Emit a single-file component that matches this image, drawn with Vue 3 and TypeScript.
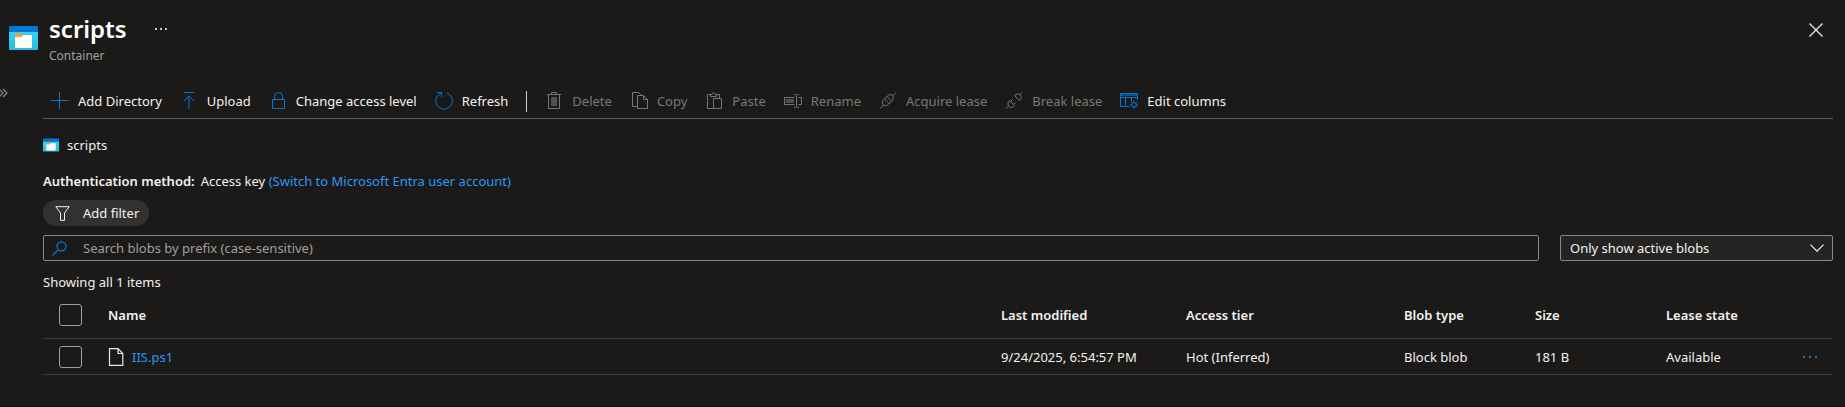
<script setup lang="ts">
import { ref } from 'vue'

interface Shape {
  d: string
  solid?: boolean
}

interface Command {
  label: string
  icon: Shape[]
  enabled: boolean
  dividerBefore?: boolean
}

interface Blob {
  name: string
  modified: string
  tier: string
  type: string
  size: string
  lease: string
}

const commands: Command[] = [
  { label: 'Add Directory', enabled: true, icon: [{ d: 'M8.5 0v17M0 8.5h17.5' }] },
  { label: 'Upload', enabled: true, icon: [{ d: 'M4 .5h10M9 3.5V17M4 9l5-5 5 5' }] },
  {
    label: 'Change access level',
    enabled: true,
    icon: [{ d: 'M3.5 7.5h12v9h-12zM5.5 7.5V4.5a4 4 0 0 1 8 0v3' }],
  },
  {
    label: 'Refresh',
    enabled: true,
    icon: [{ d: 'M11.8 1A8.3 8.3 0 1 1 6.2 1.1M1.8 .6h4.9v4.6' }],
  },
  {
    label: 'Delete',
    enabled: false,
    dividerBefore: true,
    icon: [
      { d: 'M2 2.5h14M6.5 2.5V.5h5v2M3.5 2.5v14h11v-14' },
      { d: 'M6 5h6v9H6z', solid: true },
    ],
  },
  {
    label: 'Copy',
    enabled: false,
    icon: [{ d: 'M7.5 14.5h-5V.5h6l3.2 3M7.5 3.5h6l4 4v9h-10zM13.5 3.5v4h4' }],
  },
  {
    label: 'Paste',
    enabled: false,
    icon: [{ d: 'M8.5 16.5h-6v-14h3M11.5 2.5h3v4M5.5 4.5v-2h1.500c0-2.5 3-2.5 3 0h1.500v2zM8.5 6.5h8v10h-8z' }],
  },
  {
    label: 'Rename',
    enabled: false,
    icon: [
      { d: 'M10.5 12.5H.5v-7h10M14.5 5.5h3v7h-3M10 2.5h1.500l1 1 1-1H15M10 15.5h1.500l1-1 1 1H15M12.5 3.5v11' },
      { d: 'M2 7h8v4H2z', solid: true },
    ],
  },
  {
    label: 'Acquire lease',
    enabled: false,
    icon: [{ d: 'M1 16.500l3.500-3.500M13.500 4L17 .5M4.500 13c-1.800-1.800-1-4.200.5-5.700L8.300 4c1.500-1.500 3.900-1.800 5.200-.5s1 3.700-.5 5.200l-3.300 3.300c-1.500 1.500-3.700 2.500-5.200 1zM5.500 7l5 5M8 4.500l5 5' }],
  },
  {
    label: 'Break lease',
    enabled: false,
    icon: [{ d: 'M1 16.500l2.500-2.500M14.500 3l2.500-2.500M4.500 8.500l5 5c-1.500 2-4 2.500-5.500 1s-1.500-4 .5-6zM9.500 3.500l5 5c2-1.500 2.500-4 1-5.500s-4-1.500-6 .5zM5.500 9.500l2-2M8.500 12.500l2-2' }],
  },
  {
    label: 'Edit columns',
    enabled: true,
    icon: [
      { d: 'M9.500 14.500H.5v-13h17v6.500M.5 5.500h17M5.500 5.500v9M11.500 5.500v4M14 10.500a2.300 2.300 0 1 1 0 4.600a2.300 2.300 0 1 1 0-4.600M14 8.800v1.700M14 15.100v1.700M10 12.800h1.700M16.300 12.800H18M11.200 10l1.200 1.200M15.600 14.400l1.200 1.200M16.800 10l-1.200 1.200M12.400 14.400l-1.200 1.200' },
      { d: 'M0 2h18v2H0z', solid: true },
    ],
  },
]

const blobs: Blob[] = [
  {
    name: 'IIS.ps1',
    modified: '9/24/2025, 6:54:57 PM',
    tier: 'Hot (Inferred)',
    type: 'Block blob',
    size: '181 B',
    lease: 'Available',
  },
]

const columns: string[] = ['Name', 'Last modified', 'Access tier', 'Blob type', 'Size', 'Lease state']
const prefix = ref('')
const visibility = ref('active')
const selected = ref<string[]>([])

function toggleAll(event: Event): void {
  const on = (event.target as HTMLInputElement).checked
  selected.value = on ? blobs.map((b) => b.name) : []
}
</script>

<template>
  <div class="blade">
    <svg class="defs" aria-hidden="true">
      <defs>
        <linearGradient id="container-body" x1="0" y1="0" x2="0" y2="1">
          <stop offset="0" stop-color="#32d4f5" />
          <stop offset="1" stop-color="#2fb9dc" />
        </linearGradient>
        <symbol id="container" viewBox="0 0 29 24">
          <path d="M0 5h29v18a1 1 0 0 1-1 1H1a1 1 0 0 1-1-1z" fill="url(#container-body)" />
          <path d="M1 0h27a1 1 0 0 1 1 1v5H0V1a1 1 0 0 1 1-1z" fill="#0078d4" />
          <path d="M6 8.500a1 1 0 0 1 1-1h5.500l1.500 1.500v3H6z" fill="#ff9a2e" />
          <path d="M6 11h6.500l2-2H22a1 1 0 0 1 1 1v11a1 1 0 0 1-1 1H7a1 1 0 0 1-1-1z" fill="#fff" />
        </symbol>
      </defs>
    </svg>

    <header class="head">
      <svg class="logo" aria-hidden="true"><use href="#container" /></svg>
      <div class="titles">
        <div class="title-row">
          <h1>scripts</h1>
          <button class="dots" type="button" aria-label="More options">
            <svg width="12" height="2" viewBox="0 0 12 2"><path d="M0 0h2v2H0zM5 0h2v2H5zM10 0h2v2h-2z" fill="currentColor" opacity="0.8" /></svg>
          </button>
        </div>
        <p>Container</p>
      </div>
      <button class="close" type="button" aria-label="Close">
        <svg width="14" height="14" viewBox="0 0 14 14"><path d="M.5.5l13 13M13.500.5l-13 13" stroke="currentColor" stroke-width="1.200" /></svg>
      </button>
    </header>

    <div class="body">
      <button class="expand" type="button" aria-label="Expand menu">
        <svg width="8" height="10" viewBox="0 0 8 10"><path d="M-1 1l4 4-4 4M3 1l4 4-4 4" fill="none" stroke="currentColor" stroke-width="1.200" /></svg>
      </button>

      <main>
        <div class="toolbar" role="toolbar" aria-label="Container commands">
          <template v-for="c in commands" :key="c.label">
            <span v-if="c.dividerBefore" class="divider"></span>
            <button type="button" :disabled="!c.enabled">
              <svg class="icon" viewBox="0 0 18 18" aria-hidden="true">
                <path v-for="(s, i) in c.icon" :key="i" :d="s.d" :class="s.solid ? 'solid' : 'line'" />
              </svg>
              {{ c.label }}
            </button>
          </template>
        </div>

        <nav class="crumb" aria-label="Location">
          <svg class="crumb-icon" aria-hidden="true"><use href="#container" /></svg>
          <span>scripts</span>
        </nav>

        <p class="auth"><strong>Authentication method:</strong><span>Access key <a href="#">(Switch to Microsoft Entra user account)</a></span></p>

        <button class="pill" type="button">
          <svg width="15" height="15" viewBox="0 0 15 15" aria-hidden="true"><path d="M.8.7h13.400L9.500 7v7.300h-4V7z" fill="none" stroke="currentColor" /></svg>
          Add filter
        </button>

        <div class="filters">
          <label class="search">
            <svg width="15" height="15" viewBox="0 0 15 15" aria-hidden="true"><path d="M.5 14.500l5.700-5.700M14 5.300a4.500 4.500 0 1 1-9 0a4.500 4.500 0 1 1 9 0z" fill="none" stroke="currentColor" stroke-width="1.300" /></svg>
            <input v-model="prefix" type="text" placeholder="Search blobs by prefix (case-sensitive)" aria-label="Search blobs by prefix" />
          </label>
          <div class="select">
            <select v-model="visibility" aria-label="Blob visibility">
              <option value="active">Only show active blobs</option>
            </select>
            <svg width="14" height="8" viewBox="0 0 14 8" aria-hidden="true"><path d="M.5.7L7 7.200 13.500.7" fill="none" stroke="currentColor" stroke-width="1.200" /></svg>
          </div>
        </div>

        <p class="count">Showing all {{ blobs.length }} items</p>

        <table>
          <colgroup>
            <col class="c-check" /><col /><col class="c-modified" /><col class="c-tier" />
            <col class="c-short" /><col class="c-short" /><col class="c-lease" /><col class="c-menu" />
          </colgroup>
          <thead>
            <tr>
              <th class="check"><input type="checkbox" aria-label="Select all" :checked="selected.length === blobs.length" @change="toggleAll" /></th>
              <th v-for="h in columns" :key="h" scope="col">{{ h }}</th>
              <th></th>
            </tr>
          </thead>
          <tbody>
            <tr v-for="b in blobs" :key="b.name">
              <td class="check"><input v-model="selected" type="checkbox" :value="b.name" :aria-label="'Select ' + b.name" /></td>
              <td>
                <a class="file" href="#">
                  <svg width="16" height="18" viewBox="0 0 16 18" aria-hidden="true"><path d="M1.500.7h8.500l4.800 4.800v11.800H1.500zM10 .7v4.800h4.800" fill="none" stroke="#e8e6e4" stroke-width="1.200" /></svg>
                  {{ b.name }}
                </a>
              </td>
              <td>{{ b.modified }}</td>
              <td>{{ b.tier }}</td>
              <td>{{ b.type }}</td>
              <td>{{ b.size }}</td>
              <td>{{ b.lease }}</td>
              <td>
                <button class="row-menu" type="button" :aria-label="'Actions for ' + b.name">
                  <svg width="16" height="2" viewBox="0 0 16 2"><path d="M1 0h2v2H1zM7 0h2v2H7zM13 0h2v2h-2z" fill="currentColor" /></svg>
                </button>
              </td>
            </tr>
          </tbody>
        </table>
      </main>
    </div>
  </div>
</template>

<style>
body {
  background: #1b1a19;
}
</style>

<style scoped>
.blade {
  box-sizing: border-box;
  min-height: 100vh;
  border-bottom: 1px solid #0f0f0f;
  background: #1b1a19;
  color: #f3f2f1;
  font: 13px/20px "Noto Sans", "Open Sans", sans-serif;
}
.defs {
  display: block;
  width: 0;
  height: 0;
}
button {
  display: flex;
  align-items: center;
  padding: 0;
  border: 0;
  background: none;
  color: inherit;
  font: inherit;
}
p, h1 {
  margin: 0;
}
a {
  color: #2899f5;
  text-decoration: none;
}
.head {
  display: flex;
  align-items: flex-start;
  padding: 14px 22px 20px 9px;
}
.logo {
  width: 29px;
  height: 24px;
  margin: 12px 11px 0 0;
}
.titles {
  flex: 1;
}
.title-row {
  display: flex;
  align-items: center;
  gap: 28px;
}
h1 {
  color: #fff;
  font-size: 24px;
  font-weight: 600;
  line-height: 30px;
}
.titles p {
  margin-top: 4px;
  color: #a19f9d;
  font-size: 12px;
  line-height: 16px;
}
.close {
  margin-top: 9px;
}
.body {
  display: flex;
  align-items: flex-start;
}
.expand {
  width: 43px;
  margin-top: 4px;
  color: #8a8886;
}
main {
  flex: 1;
  min-width: 0;
  padding-right: 12px;
}
.toolbar {
  display: flex;
  align-items: center;
  gap: 18px;
  height: 34px;
  padding-left: 8px;
  border-bottom: 1px solid #605e5c;
  white-space: nowrap;
}
.toolbar button {
  gap: 9px;
}
.toolbar button:disabled {
  color: #797775;
}
.divider {
  width: 1px;
  height: 21px;
  background: #d2d0ce;
}
.icon {
  width: 18px;
  height: 18px;
  color: #0078d4;
}
button:disabled .icon {
  color: #797775;
}
.line {
  fill: none;
  stroke: currentColor;
}
.solid {
  fill: currentColor;
  opacity: 0.6;
}
.crumb {
  display: flex;
  align-items: center;
  gap: 8px;
  margin-top: 16px;
}
.crumb-icon {
  width: 16px;
  height: 14px;
}
.auth {
  display: flex;
  gap: 6px;
  margin-top: 16px;
}
strong, th {
  font-weight: 600;
}
.pill {
  gap: 13px;
  height: 26px;
  margin-top: 9px;
  padding: 0 10px 0 12px;
  border-radius: 13px;
  background: #323130;
}
.filters {
  display: flex;
  gap: 21px;
  margin-top: 9px;
}
.search, .select {
  box-sizing: border-box;
  display: flex;
  align-items: center;
  height: 26px;
  border: 1px solid #8a8886;
  border-radius: 2px;
}
.search {
  flex: 1;
  gap: 16px;
  padding-left: 8px;
  color: #0078d4;
}
input, select {
  min-width: 0;
  border: 0;
  outline: 0;
  background: none;
  color: #f3f2f1;
  font: inherit;
}
.search input {
  flex: 1;
  padding: 0;
}
.search input::placeholder {
  color: #a19f9d;
  opacity: 1;
}
.select {
  width: 273px;
  padding-right: 8px;
  background: #252423;
}
select {
  flex: 1;
  padding: 0 0 0 9px;
  appearance: none;
}
option {
  background: #252423;
}
.count {
  margin-top: 11px;
}
table {
  width: 100%;
  border-collapse: separate;
  border-spacing: 0;
  table-layout: fixed;
}
.c-check {
  width: 65px;
}
.c-modified {
  width: 185px;
}
.c-tier {
  width: 218px;
}
.c-short {
  width: 131px;
}
.c-lease {
  width: 136px;
}
.c-menu {
  width: 31px;
}
th, td {
  box-sizing: border-box;
  height: 36px;
  padding: 0;
  border-bottom: 1px solid #3b3a39;
  text-align: left;
  white-space: nowrap;
}
th {
  height: 47px;
}
th.check, td.check {
  padding-left: 16px;
}
input[type="checkbox"] {
  display: block;
  box-sizing: border-box;
  width: 23px;
  height: 22px;
  margin: 0;
  border: 1px solid #a19f9d;
  border-radius: 3px;
  appearance: none;
}
input[type="checkbox"]:checked {
  background: #0078d4;
}
.file {
  display: flex;
  align-items: center;
  gap: 8px;
}
.row-menu {
  color: #0078d4;
}
</style>
